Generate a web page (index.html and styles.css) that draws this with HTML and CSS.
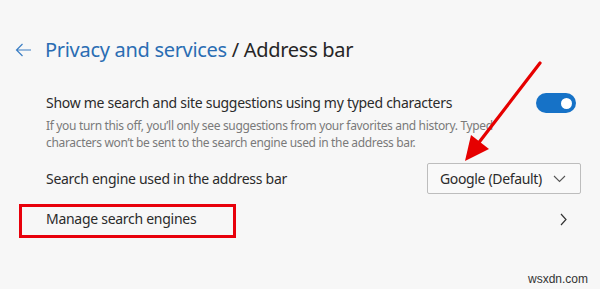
FILE: index.html
```html
<!DOCTYPE html>
<html>
    <head>
        <link rel="stylesheet" href="styles.css">
    </head>
    <body>
        <div class="page">
            <div class="head">
                <svg class="back" width="17" height="14" viewBox="0 0 17 14">
                    <path d="M16 7H1.5M7.5 1L1.5 7l6 6" fill="none" stroke="#3c7fc4" stroke-width="1.2"/>
                </svg>
                <h1><span class="crumb">Privacy and services</span> / Address bar</h1>
            </div>
            <div class="list">
                <div class="row row-toggle">
                    <div class="text">
                        <div class="label">Show me search and site suggestions using my typed characters</div>
                        <div class="desc">If you turn this off, you’ll only see suggestions from your favorites and history. Typed<br>characters won’t be sent to the search engine used in the address bar.</div>
                    </div>
                    <span class="toggle"><span class="knob"></span></span>
                </div>
                <div class="row row-select">
                    <div class="label">Search engine used in the address bar</div>
                    <div class="select">
                        <span>Google (Default)</span>
                        <svg width="13" height="8" viewBox="0 0 13 8">
                            <path d="M1 1l5.5 5.5L12 1" fill="none" stroke="#555" stroke-width="1.1"/>
                        </svg>
                    </div>
                </div>
                <div class="row row-link">
                    <div class="label">Manage search engines</div>
                    <svg class="chev" width="7" height="13" viewBox="0 0 7 13">
                        <path d="M1 1l5 5.5L1 12" fill="none" stroke="#333" stroke-width="1.2"/>
                    </svg>
                    <span class="mark"></span>
                </div>
            </div>
            <svg class="arrow" width="600" height="289" viewBox="0 0 600 289">
                <line x1="540" y1="63" x2="477" y2="145" stroke="#e60000" stroke-width="3.2" stroke-linecap="round"/>
                <polygon points="465,161 471,135 489,149" fill="#e60000"/>
            </svg>
            <div class="wm">wsxdn.com</div>
        </div>
    </body>
</html>
```

FILE: styles.css
```css
*{
    margin: 0;
    padding: 0;
    box-sizing: border-box;
}
body{
    background: #f7f7f7;
    font-family: 'Noto Sans', sans-serif;
    color: #2b2b2b;
}
.page{
    position: relative;
    width: 600px;
    height: 289px;
    padding: 36px 19px 0 15px;
    overflow: hidden;
}
.head{
    display: flex;
    align-items: center;
    gap: 13px;
}
.back{
    display: block;
}
.head h1{
    font-size: 20px;
    font-weight: 400;
    line-height: 28px;
    letter-spacing: -0.3px;
    color: #262626;
}
.head .crumb{
    color: #2a6db3;
}
.list{
    padding: 29px 0 0 31px;
}
.row{
    display: flex;
    align-items: center;
    justify-content: space-between;
}
.label{
    font-size: 14px;
    line-height: 20px;
    letter-spacing: -0.28px;
    color: #2b2b2b;
}
.text{
    flex: 1;
    min-width: 0;
}
.desc{
    margin-top: 4px;
    font-size: 12px;
    line-height: 17px;
    letter-spacing: -0.33px;
    white-space: nowrap;
    color: #7a7a7a;
}
.row-toggle{
    align-items: flex-start;
}
.toggle{
    display: flex;
    flex: none;
    align-items: center;
    justify-content: flex-end;
    width: 40px;
    height: 20px;
    margin-right: 5px;
    padding-right: 4px;
    border-radius: 10px;
    background: #1672c7;
}
.knob{
    width: 11px;
    height: 11px;
    border-radius: 50%;
    background: #fff;
}
.row-select{
    margin-top: 12px;
}
.select{
    display: flex;
    align-items: center;
    justify-content: space-between;
    width: 154px;
    height: 31px;
    padding: 0 14px 0 12px;
    border: 1px solid #bdbdbd;
    border-radius: 2px;
    background: #f9f9f9;
    font-size: 14px;
    letter-spacing: -0.35px;
    color: #2b2b2b;
}
.row-link{
    position: relative;
    height: 34px;
    margin-top: 10px;
    padding-right: 14px;
    padding-bottom: 4px;
}
.mark{
    position: absolute;
    left: -27px;
    top: 0;
    width: 217px;
    height: 34px;
    border: 3.5px solid #e8000b;
}
.arrow{
    position: absolute;
    left: 0;
    top: 0;
}
.wm{
    position: absolute;
    right: 12px;
    bottom: 3px;
    font-family: 'Liberation Sans', sans-serif;
    font-size: 12px;
    color: #333;
}
```
